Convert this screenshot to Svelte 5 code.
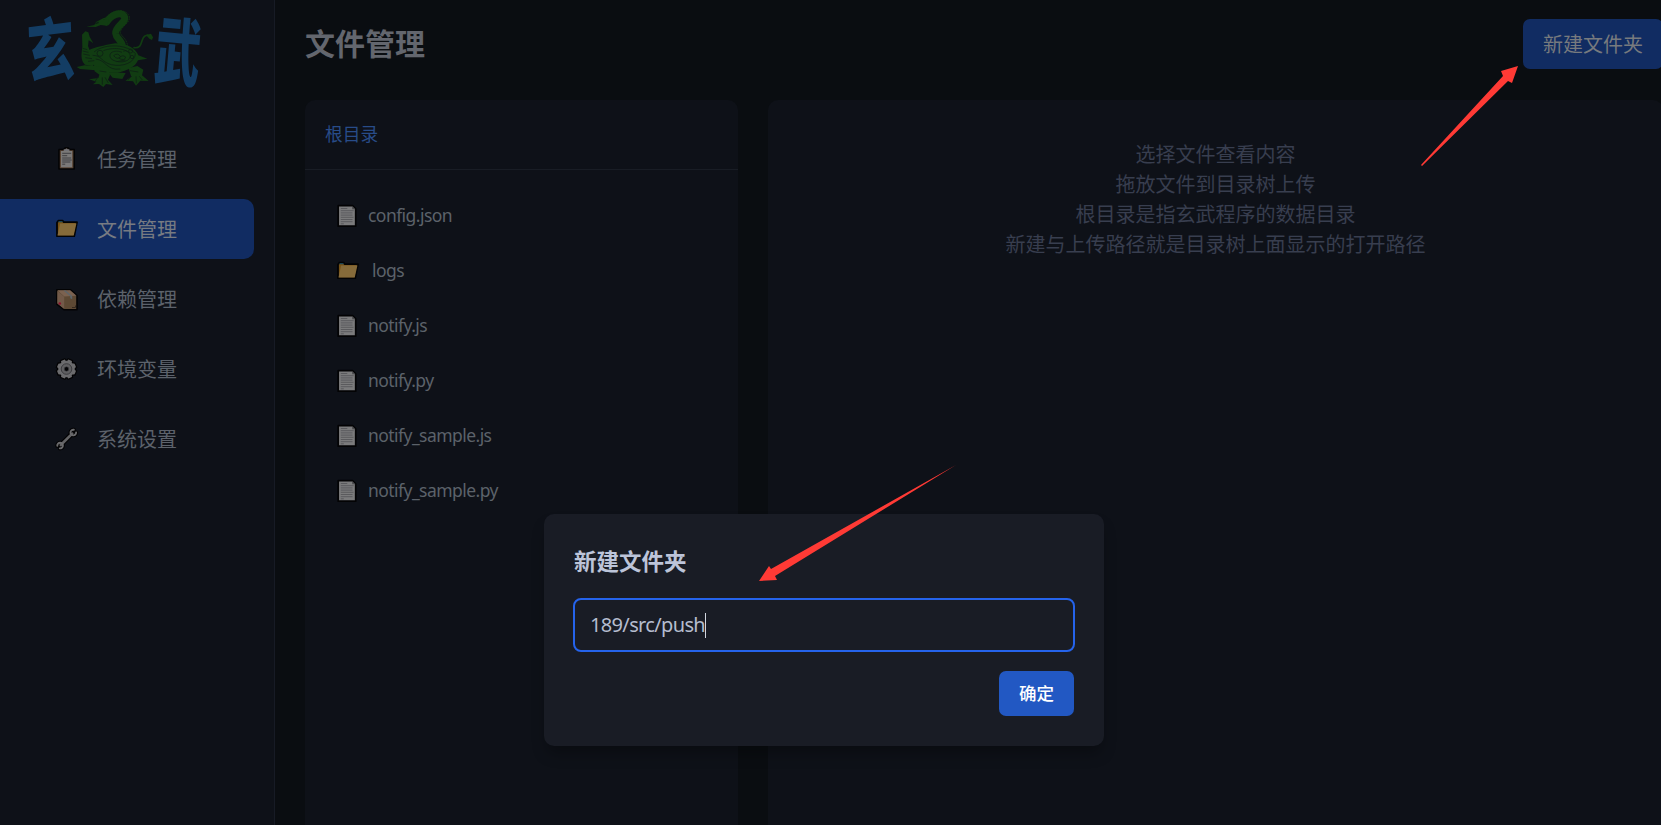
<script>
  const nav = [
    { label: '任务管理', icon: 'clipboard' },
    { label: '文件管理', icon: 'folder', active: true },
    { label: '依赖管理', icon: 'box' },
    { label: '环境变量', icon: 'gear' },
    { label: '系统设置', icon: 'wrench' }
  ];
  const files = [
    { name: 'config.json', icon: 'doc' },
    { name: 'logs', icon: 'folder' },
    { name: 'notify.js', icon: 'doc' },
    { name: 'notify.py', icon: 'doc' },
    { name: 'notify_sample.js', icon: 'doc' },
    { name: 'notify_sample.py', icon: 'doc' }
  ];
  const hints = ['选择文件查看内容', '拖放文件到目录树上传', '根目录是指玄武程序的数据目录', '新建与上传路径就是目录树上面显示的打开路径'];
  const teeth = [0, 45, 90, 135, 180, 225, 270, 315];
</script>

{#snippet icon(kind)}
  <svg class="icon" viewBox="0 0 24 24" width="24" height="24" stroke-linejoin="round">
    {#if kind === 'clipboard'}
      <path d="M4 2.500h4.700l1.300-1.600h3.200l1.300 1.600h4.700V22H4z" fill="#5a4432" stroke="#030304" stroke-width="1.600" />
      <path d="M6 4h11.200v16.300H6z" fill="#7b7978" />
      <path d="M8.700 4V2.300h1.800l1-1.100 1 1.100h1.900V4z" fill="#737378" />
      <path d="M7.200 6.300h9M7.200 8.700h5M7.200 11h9M7.200 13h9.500M7.200 15h8.200M7.200 17.200h3" stroke="#39393c" stroke-width=".9" />
    {:else if kind === 'folder'}
      <path d="M2 5.500l1.500-1.800h4l1.300 1.500h13.200l-2.800 14H2z" fill="#785316" stroke="#030304" stroke-width="1.800" />
      <path d="M5.100 6.500h16.300l-2.700 12H2.500z" fill="#866b3a" />
      <path d="M3.500 4.700h4" stroke="#174b62" stroke-width="1.100" />
    {:else if kind === 'box'}
      <path d="M1.800 2.700h13.500l6.700 6v14H9L1.800 17z" fill="#5d4934" stroke="#030304" stroke-width="1.600" />
      <path d="M2.300 3.200h12.900L21.500 8.800 9.300 9.600z" fill="#7b6250" />
      <path d="M2.300 3.800l6.900 6v12.200l-6.900-5.500z" fill="#725a49" />
      <path d="M8.500 3.400h2.200l6.500 5.700v3.200l-2-1V9.300z" fill="#5e6569" />
      <circle cx="4.800" cy="16.500" r="1.300" fill="#8b1530" />
      <path d="M17 20.500h3.500v-2" fill="none" stroke="#35291e" />
    {:else if kind === 'gear'}
      {#each [['#030304', 6.400, 0], ['#6b6b6d', 4.600, 1.200]] as [tone, width, inset]}
        <g fill={tone}>
          <circle cx="11.500" cy="12" r={9.500 - inset} />
          {#each teeth as angle}
            <rect x={11.500 - width / 2} y={1.300 + inset} {width} height="6" rx="1" transform={`rotate(${angle + 22.500} 11.500 12)`} />
          {/each}
        </g>
      {/each}
      <circle cx="11.500" cy="12" r="5.300" fill="#5f5f61" stroke="#3c3c3f" stroke-width="1" />
      <circle cx="11.500" cy="12" r="2.300" fill="#050507" stroke="#454548" stroke-width=".6" />
    {:else if kind === 'wrench'}
      <g stroke-linecap="round" fill="none">
        <path d="M5.800 18L17.200 6.600" stroke="#030304" stroke-width="5" />
        <path d="M18.800 2.800a2.800 2.800 0 1 0 2.300 2.600M2.300 18.800a2.800 2.800 0 1 1 2.500 2.600" stroke="#030304" stroke-width="4" />
        <path d="M5.800 18L17.200 6.600" stroke="#626264" stroke-width="2.600" />
        <path d="M18.800 2.800a2.800 2.800 0 1 0 2.300 2.600M2.300 18.800a2.800 2.800 0 1 1 2.500 2.600" stroke="#6a6a6c" stroke-width="1.900" />
      </g>
    {:else}
      <path d="M2.200 1.700h14.300l3.200 3.200v17.300H2.200z" fill="#7b7b7c" stroke="#030304" stroke-width="1.700" />
      <path d="M16.200 2v3.300h3.200z" fill="#4a4a4d" />
      <path d="M4.800 4.500h6.500M4.800 6.700h12.900M4.800 8.900h11.700M4.800 11.100h11.700M4.800 13.300h12.700M4.800 15.500h11.700M4.800 17.700h11.700M4.800 19.800h3" stroke="#525255" stroke-width=".8" />
    {/if}
  </svg>
{/snippet}

<div class="app">
  <aside>
    <div class="logo">
      <svg viewBox="0 0 825 330" width="275" height="110">
        <g class="brush">
          <text transform="translate(84 236) rotate(-7) skewX(-5) scale(.79 1.160)">玄</text>
          <text transform="translate(459 232) rotate(5) scale(.76 1.220)">武</text>
        </g>
        <g fill="#113c12" stroke="#113c12" stroke-linecap="round" stroke-linejoin="round">
          <path d="M320 66C335 43 362 34 372 48C384 66 345 76 347 100C349 118 367 120 368 142" fill="none" stroke-width="21" />
          <path d="M325 46C343 30 372 26 385 44C399 65 362 78 361 97C362 110 380 113 383 139" fill="none" stroke-width="3" stroke-dasharray="3 5" />
          <path d="M259 80l24-5 5-9 23-12 12-2-13 8 16-1-5 18-19-2-15 6z" stroke="none" />
          <path d="M246 104l10-10 9 3 4 13 11 20-10-7-4-2-2 17 6 15 15 17-6 29-24-5c-15-16-10-33-8-54z" stroke="none" />
          <path d="M264 152c21-11 45-15 82-22 36 0 61 15 69 36l27 10-28 5c-8 20-32 31-60 37-39 4-67-12-82-31z" stroke="none" />
          <path d="M402 143C430 147 421 115 435 108L443 105" fill="none" stroke-width="5" />
          <path d="M438 105l15-4 6 11-3 8-8-4z" stroke="none" />
          <path d="M230 201l24-5 34 2 18 9-29 3-37-3zM286 199l37 4 7 22-6 14 14 16-20-3-8 9-13-9-18 1 10-8-22-7 28-4 3-10-15-11zM386 204l26-6 18 11-4 17 20 17-25-1-13 15-9-13-23-2 18-12-5-14zM324 216l53 3-10 18-29-4z" stroke="none" />
        </g>
        <g fill="none" stroke="#0d2015" stroke-width="2.500">
          <path d="M282 156C316 128 385 134 406 161C405 187 370 202 334 194C303 186 306 166 278 166" />
          <path d="M287 177C319 180 320 213 361 207M310 152C344 139 389 147 391 168C389 190 347 190 333 176C321 157 345 148 366 157M341 167q12-10 20 2q-8 13-20-2M357 175q9-13 20-4q-3 13-20 4M370 154q7-6 17 3M350 185l26-5" />
          <circle cx="300" cy="160" r="9" />
          <circle cx="392" cy="153" r="6" />
          <circle cx="396" cy="171" r="5" />
          <path d="M248 145l14 4M248 153l17 4M250 162l19 4M256 173l20 3M264 184l19-2M293 232l-9 14M307 232v22M315 232l10 17M395 228l-11 12M408 229l1 21M418 229l9 11M390 212l25 4M299 213l20 3" />
          <path d="M286 71l10-4" stroke-width="4" />
        </g>
      </svg>
    </div>
    <nav>
      {#each nav as item}
        <div class="nav-item" class:active={item.active}>
          {@render icon(item.icon)}
          <span>{item.label}</span>
        </div>
      {/each}
    </nav>
  </aside>

  <main>
    <header>
      <h1>文件管理</h1>
      <button class="create">新建文件夹</button>
    </header>
    <div class="panels">
      <section class="tree">
        <div class="crumb">根目录</div>
        <div class="files">
          {#each files as file}
            <div class="file" class:dir={file.icon === 'folder'}>
              {@render icon(file.icon)}
              <span>{file.name}</span>
            </div>
          {/each}
        </div>
      </section>
      <section class="viewer">
        {#each hints as hint}<p>{hint}</p>{/each}
      </section>
    </div>
  </main>

  <div class="dialog">
    <h2>新建文件夹</h2>
    <div class="field"><span>189/src/push</span><i></i></div>
    <button class="confirm">确定</button>
  </div>

  <svg class="arrows" viewBox="0 0 1661 825" width="1661" height="825" fill="#ff3a35">
    <path d="M1518 66l-6 17-4-2-86 85-1-1 82-89-2-5z" />
    <path d="M759 581l10-15 2 3 185-104-181 111 2 4z" />
  </svg>
</div>

<style>
  :global(body) { margin: 0; overflow: hidden; background: #0a0d11; }
  .app {
    position: relative;
    display: flex;
    width: 1661px;
    height: 825px;
    overflow: hidden;
    background: #0a0d11;
    color: #65686f;
    font-family: 'Noto Sans', 'Noto Sans CJK SC', sans-serif;
    font-size: 20px;
  }
  aside {
    box-sizing: border-box;
    flex: none;
    width: 275px;
    background: #0e1118;
    border-right: 1px solid #171b25;
  }
  .logo { height: 129px; }
  .logo svg { display: block; }
  .brush { fill: #133d64; font: 900 180px 'Noto Sans CJK SC', sans-serif; }
  nav { display: flex; flex-direction: column; gap: 10px; }
  .nav-item {
    box-sizing: border-box;
    display: flex;
    align-items: center;
    gap: 18px;
    width: 254px;
    height: 60px;
    padding-left: 55px;
    border-radius: 0 10px 10px 0;
    font-family: 'Noto Sans CJK SC', sans-serif;
    color: #5c626b;
  }
  .nav-item span, .file span, .field span { padding-bottom: 2px; }
  .nav-item.active { background: #112c62; color: #777b82; }
  .icon { flex: none; display: block; }
  main { flex: none; width: 1358px; padding-left: 30px; display: flex; flex-direction: column; }
  header {
    display: flex;
    align-items: center;
    justify-content: space-between;
    height: 50px;
    padding: 19px 0 31px;
  }
  h1 { margin: 0; padding-bottom: 5px; font: 700 30px/44px 'Noto Sans CJK SC', sans-serif; color: #63666e; }
  button { border: 0; padding: 0 0 2px; font-family: 'Noto Sans CJK SC', sans-serif; }
  .create { width: 140px; height: 50px; border-radius: 7px; background: #112c62; color: #777a7e; font-size: 20px; }
  .panels { flex: 1; display: flex; gap: 30px; }
  section { background: #0e1118; border-radius: 10px 10px 0 0; }
  .tree { width: 433px; }
  .crumb {
    box-sizing: border-box;
    height: 70px;
    padding-left: 20px;
    border-bottom: 1px solid #191d25;
    color: #284c88;
    font: 17.7px/67px 'Noto Sans CJK SC', sans-serif;
  }
  .files { padding: 18px 0 0 31px; }
  .file { display: flex; align-items: center; gap: 8px; height: 55px; font-size: 17.5px; letter-spacing: -.55px; color: #5c626a; }
  .file.dir { gap: 12px; }
  .viewer { flex: 1; padding-top: 39px; text-align: center; }
  p { margin: 0; color: #383e4f; font: 20px/30px 'Noto Sans CJK SC', sans-serif; }
  .dialog {
    position: absolute;
    left: 544px;
    top: 514px;
    box-sizing: border-box;
    display: flex;
    flex-direction: column;
    width: 560px;
    height: 232px;
    padding: 28px 29px;
    border-radius: 10px;
    background: #191c25;
    box-shadow: 0 10px 15px -3px #0000004d;
  }
  h2 { margin: 0 0 20px 1px; font: 700 22.500px/36px 'Noto Sans CJK SC', sans-serif; color: #bcc4d9; }
  .field {
    box-sizing: border-box;
    display: flex;
    flex: none;
    align-items: center;
    height: 54px;
    padding-left: 15px;
    border: 2px solid #2563eb;
    border-radius: 8px;
    color: #b5bdcf;
    letter-spacing: -.65px;
  }
  .field i { width: 1px; height: 25px; background: #d1d5df; }
  .confirm {
    align-self: flex-end;
    flex: none;
    width: 75px;
    height: 45px;
    margin: 19px 1px 0 0;
    padding-bottom: 3px;
    border-radius: 7px;
    background: #2258c3;
    color: #fff;
    font-size: 17.5px;
    font-weight: 500;
  }
  .arrows { position: absolute; inset: 0; pointer-events: none; }
</style>
